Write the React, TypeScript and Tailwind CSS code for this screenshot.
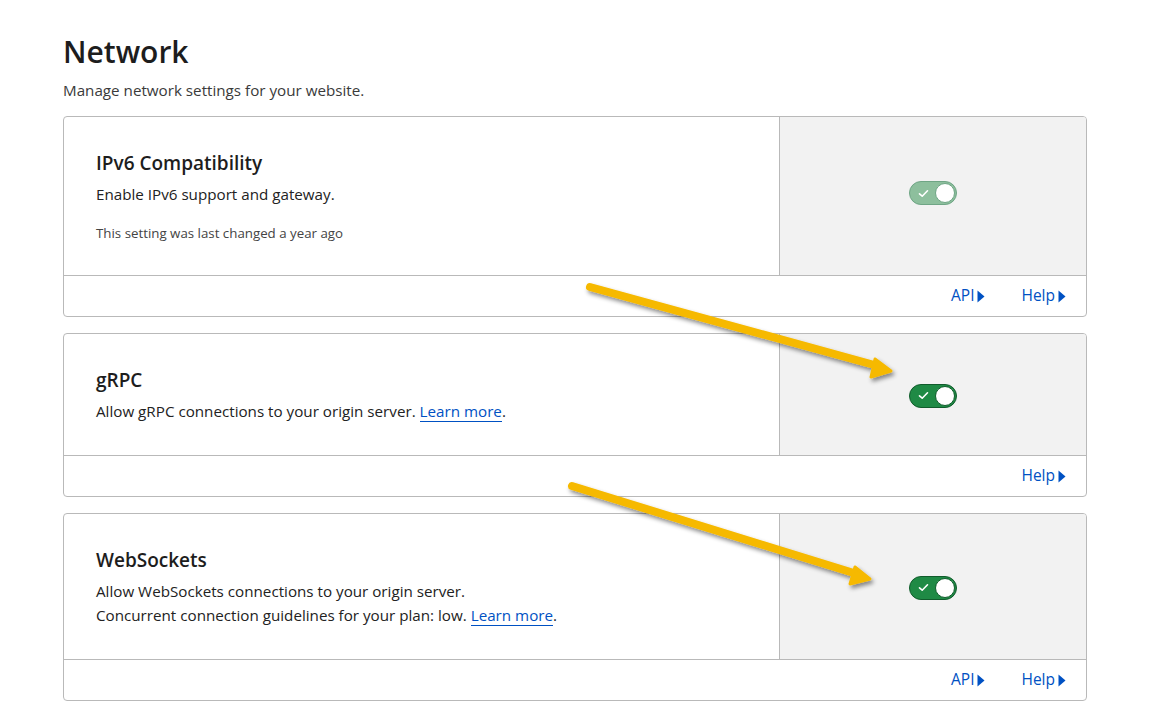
import type { ReactNode } from 'react';

type Link = { label: string };

type SettingCardProps = {
  title: string;
  children: ReactNode;
  enabled: boolean;
  muted?: boolean;
  links: Link[];
};

const Toggle = ({ muted }: { muted?: boolean }) => (
  <div
    className={
      muted
        ? 'mb-[6px] flex h-[24px] w-[48px] items-center justify-between rounded-full border border-[#6fa585] bg-[#8dbf9d] pl-[8px] pr-[1px]'
        : 'mt-[2px] flex h-[24px] w-[48px] items-center justify-between rounded-full border border-[#115c2c] bg-[#1f8a45] pl-[8px] pr-[1px]'
    }
  >
    <svg width="11" height="9" viewBox="0 0 11 9" fill="none">
      <path d="M1.5 4.8 L4.2 7.2 L9.5 1.8" stroke="white" strokeWidth="1.6" strokeLinecap="round" strokeLinejoin="round" />
    </svg>
    <span
      className={
        muted
          ? 'h-[20px] w-[20px] rounded-full border border-[#6fa585] bg-white'
          : 'h-[20px] w-[20px] rounded-full border border-[#115c2c] bg-white'
      }
    />
  </div>
);

const FooterLink = ({ label }: Link) => (
  <a className="flex items-center gap-[3px] text-[15.5px] text-[#0051c3]" href="#">
    {label}
    <svg width="8" height="13" viewBox="0 0 8 13">
      <path d="M0.5 0.5 L7.5 6.5 L0.5 12.5 Z" fill="#0051c3" />
    </svg>
  </a>
);

const SettingCard = ({ title, children, muted, links }: SettingCardProps) => (
  <div className="overflow-hidden rounded border border-[#b9b9b9] bg-white">
    <div className="flex">
      <div className="flex-1 px-[32px] py-[32px]">
        <h3 className="text-[19px] leading-[28px] font-semibold text-[#1d1d1d]">{title}</h3>
        {children}
      </div>
      <div className="flex w-[307px] items-center justify-center border-l border-[#b9b9b9] bg-[#f2f2f2]">
        <Toggle muted={muted} />
      </div>
    </div>
    <div className="flex h-[41px] items-center justify-end gap-[36px] border-t border-[#b9b9b9] pr-[20px]">
      {links.map((l) => (
        <FooterLink key={l.label} label={l.label} />
      ))}
    </div>
  </div>
);

const LearnMore = () => (
  <a href="#" className="border-b border-[#0051c3] text-[#0051c3]">
    Learn more
  </a>
);

const Arrows = () => (
  <svg className="pointer-events-none absolute left-0 top-0" width="1156" height="715">
    <defs>
      <filter id="shadow" x="-10%" y="-10%" width="120%" height="140%">
        <feDropShadow dx="2" dy="3" stdDeviation="2" floodColor="#000" floodOpacity="0.45" />
      </filter>
    </defs>
    <g filter="url(#shadow)" fill="#f6b900" stroke="#f6b900" strokeLinecap="round" strokeLinejoin="round">
      <line x1="590" y1="287" x2="878" y2="366" strokeWidth="8" />
      <path d="M875 359 L891 371 L871 377 Z" strokeWidth="3" />
      <line x1="572" y1="486" x2="857" y2="574" strokeWidth="8" />
      <path d="M855 567 L870 579 L850 584 Z" strokeWidth="3" />
    </g>
  </svg>
);

export default function App() {
  return (
    <div className="relative h-[715px] w-[1156px] bg-white font-['Open_Sans',sans-serif] text-[#222]">
      <div className="ml-[63px] w-[1024px] pt-[32px]">
        <h1 className="text-[30px] leading-[40px] font-semibold text-[#1d1d1d]">Network</h1>
        <p className="mt-[7px] text-[15.2px] leading-[22px] text-[#3a3a3a]">Manage network settings for your website.</p>
        <div className="mt-[15px] flex flex-col gap-[16px]">
          <SettingCard title="IPv6 Compatibility" enabled muted links={[{ label: 'API' }, { label: 'Help' }]}>
            <p className="mt-[5px] text-[15.2px] leading-[24px]">Enable IPv6 support and gateway.</p>
            <p className="mt-[17px] text-[13.3px] leading-[20px] text-[#444]">This setting was last changed a year ago</p>
          </SettingCard>
          <SettingCard title="gRPC" enabled links={[{ label: 'Help' }]}>
            <p className="mt-[5px] text-[15.2px] leading-[24px]">
              Allow gRPC connections to your origin server. <LearnMore />.
            </p>
          </SettingCard>
          <SettingCard title="WebSockets" enabled links={[{ label: 'API' }, { label: 'Help' }]}>
            <p className="mt-[5px] text-[15.2px] leading-[24px]">Allow WebSockets connections to your origin server.</p>
            <p className="text-[15.2px] leading-[24px]">
              Concurrent connection guidelines for your plan: low. <LearnMore />.
            </p>
          </SettingCard>
        </div>
      </div>
      <Arrows />
    </div>
  );
}
